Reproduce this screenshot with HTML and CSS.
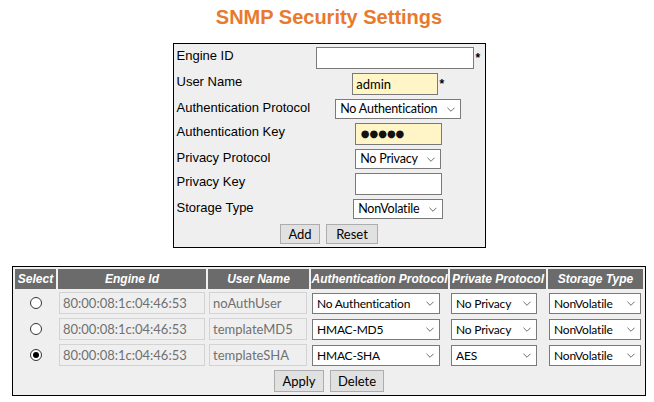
FILE: index.html
```html
<!DOCTYPE html>
<html>
<head>
<meta charset="utf-8">
<title>SNMP Security Settings</title>
<link rel="stylesheet" href="styles.css">
</head>
<body>
<div class="page">
  <h1 class="title">SNMP Security Settings</h1>

  <table class="form-box">
    <tr class="row-in">
      <td class="lbl">Engine ID</td>
      <td class="fld"><input class="txt w-engine" type="text"><span class="req">*</span></td>
    </tr>
    <tr class="row-in">
      <td class="lbl">User Name</td>
      <td class="fld"><input class="txt yellow w-user" type="text" value="admin"><span class="req">*</span></td>
    </tr>
    <tr class="row-sel">
      <td class="lbl">Authentication Protocol</td>
      <td class="fld"><span class="sel w-auth"><select><option>No Authentication</option></select><svg class="chev" viewBox="0 0 9 5"><path d="M0.5 0.5 L4.5 4.5 L8.5 0.5"/></svg></span></td>
    </tr>
    <tr class="row-in">
      <td class="lbl">Authentication Key</td>
      <td class="fld"><span class="txt yellow w-key dots">●●●●●</span></td>
    </tr>
    <tr class="row-sel">
      <td class="lbl">Privacy Protocol</td>
      <td class="fld"><span class="sel w-priv"><select><option>No Privacy</option></select><svg class="chev" viewBox="0 0 9 5"><path d="M0.5 0.5 L4.5 4.5 L8.5 0.5"/></svg></span></td>
    </tr>
    <tr class="row-in">
      <td class="lbl">Privacy Key</td>
      <td class="fld"><input class="txt w-key" type="text"></td>
    </tr>
    <tr class="row-sel">
      <td class="lbl">Storage Type</td>
      <td class="fld"><span class="sel w-store"><select><option>NonVolatile</option></select><svg class="chev" viewBox="0 0 9 5"><path d="M0.5 0.5 L4.5 4.5 L8.5 0.5"/></svg></span></td>
    </tr>
    <tr>
      <td class="btns" colspan="2"><button class="btn b-add">Add</button><button class="btn b-reset">Reset</button></td>
    </tr>
  </table>

  <table class="users">
    <colgroup>
      <col class="c-select"><col class="c-engine"><col class="c-user"><col class="c-auth"><col class="c-priv"><col class="c-store">
    </colgroup>
    <tr>
      <th>Select</th><th>Engine Id</th><th>User Name</th><th>Authentication Protocol</th><th>Private Protocol</th><th>Storage Type</th>
    </tr>
    <tr>
      <td class="rad"><span class="radio"></span></td>
      <td><span class="dis w-eid">80:00:08:1c:04:46:53</span></td>
      <td><span class="dis w-uname">noAuthUser</span></td>
      <td><span class="sel t-auth"><select><option>No Authentication</option></select><svg class="chev" viewBox="0 0 9 5"><path d="M0.5 0.5 L4.5 4.5 L8.5 0.5"/></svg></span></td>
      <td><span class="sel t-priv"><select><option>No Privacy</option></select><svg class="chev" viewBox="0 0 9 5"><path d="M0.5 0.5 L4.5 4.5 L8.5 0.5"/></svg></span></td>
      <td><span class="sel t-store"><select><option>NonVolatile</option></select><svg class="chev" viewBox="0 0 9 5"><path d="M0.5 0.5 L4.5 4.5 L8.5 0.5"/></svg></span></td>
    </tr>
    <tr>
      <td class="rad"><span class="radio"></span></td>
      <td><span class="dis w-eid">80:00:08:1c:04:46:53</span></td>
      <td><span class="dis w-uname">templateMD5</span></td>
      <td><span class="sel t-auth"><select><option>HMAC-MD5</option></select><svg class="chev" viewBox="0 0 9 5"><path d="M0.5 0.5 L4.5 4.5 L8.5 0.5"/></svg></span></td>
      <td><span class="sel t-priv"><select><option>No Privacy</option></select><svg class="chev" viewBox="0 0 9 5"><path d="M0.5 0.5 L4.5 4.5 L8.5 0.5"/></svg></span></td>
      <td><span class="sel t-store"><select><option>NonVolatile</option></select><svg class="chev" viewBox="0 0 9 5"><path d="M0.5 0.5 L4.5 4.5 L8.5 0.5"/></svg></span></td>
    </tr>
    <tr>
      <td class="rad"><span class="radio checked"></span></td>
      <td><span class="dis w-eid">80:00:08:1c:04:46:53</span></td>
      <td><span class="dis w-uname">templateSHA</span></td>
      <td><span class="sel t-auth"><select><option>HMAC-SHA</option></select><svg class="chev" viewBox="0 0 9 5"><path d="M0.5 0.5 L4.5 4.5 L8.5 0.5"/></svg></span></td>
      <td><span class="sel t-priv"><select><option>AES</option></select><svg class="chev" viewBox="0 0 9 5"><path d="M0.5 0.5 L4.5 4.5 L8.5 0.5"/></svg></span></td>
      <td><span class="sel t-store"><select><option>NonVolatile</option></select><svg class="chev" viewBox="0 0 9 5"><path d="M0.5 0.5 L4.5 4.5 L8.5 0.5"/></svg></span></td>
    </tr>
    <tr>
      <td class="btns" colspan="6"><button class="btn b-apply">Apply</button><button class="btn b-delete">Delete</button></td>
    </tr>
  </table>
</div>
</body>
</html>
```

FILE: styles.css
```css
* { box-sizing: border-box; }

body {
  margin: 0;
  background: #ffffff;
  font-family: "Liberation Sans", Arial, sans-serif;
  font-size: 13px;
  color: #000;
}

.page {
  width: 634px;
  margin-left: 12px;
}

.title {
  margin: 5px 0 14px;
  text-align: center;
  font-size: 20px;
  line-height: 24px;
  font-weight: bold;
  color: #e8792d;
}

/* ---------- top form ---------- */
.form-box {
  margin: 0 auto;
  width: 313px;
  border: 1px solid #000;
  border-spacing: 2px;
  background: #efefef;
  table-layout: fixed;
}

.form-box td { padding: 1px 0; }

.form-box .lbl {
  width: 136px;
  vertical-align: top;
  line-height: 15px;
  padding-top: 2px;
  padding-left: 1px;
  white-space: nowrap;
}

.form-box .fld {
  width: 168px;
  text-align: center;
  vertical-align: middle;
  white-space: nowrap;
  font-size: 0;
}

.row-in td { height: 24px; }
.row-sel td { height: 22px; }

.txt {
  display: inline-block;
  vertical-align: middle;
  height: 22px;
  border: 1px solid #7a7a7a;
  background: #fff;
  padding: 0 3px;
  font-family: Lato, "Open Sans", sans-serif;
  font-size: 13px;
  color: #000;
  text-align: left;
  line-height: 20px;
  outline: none;
}

.yellow { background: #fff5c6; }

.w-engine { width: 158px; }
.w-user { width: 86px; }
.w-key { width: 87px; }

.dots {
  font-family: "DejaVu Sans", sans-serif;
  font-size: 10px;
  color: #111;
  padding-left: 5px;
}

.req {
  display: inline-block;
  vertical-align: middle;
  width: 6px;
  text-align: right;
  font-family: "Liberation Sans", Arial, sans-serif;
  font-size: 12px;
  font-weight: bold;
  line-height: 12px;
}

.sel {
  position: relative;
  display: inline-block;
  vertical-align: middle;
  font-size: 0;
}

.sel select {
  -webkit-appearance: none;
  appearance: none;
  display: block;
  width: 100%;
  height: 20px;
  margin: 0;
  border: 1px solid #7a7a7a;
  border-radius: 0;
  background: #fff;
  padding: 0 14px 0 4px;
  font-family: Lato, "Open Sans", sans-serif;
  font-size: 12.5px;
  letter-spacing: -0.2px;
  line-height: 18px;
  color: #000;
  outline: none;
}

.chev {
  position: absolute;
  right: 6px;
  top: 50%;
  width: 8px;
  height: 5px;
  margin-top: -2px;
  fill: none;
  stroke: #5a5a5a;
  stroke-width: 1;
  pointer-events: none;
}

.w-auth { width: 126px; }
.w-priv { width: 86px; }
.w-store { width: 90px; }

.btns {
  text-align: center;
  font-size: 0;
}

.btn {
  display: inline-block;
  vertical-align: middle;
  margin: 0 3px;
  padding: 0;
  height: 20px;
  border: 1px solid #adadad;
  background: #e1e1e1;
  font-family: Lato, "Open Sans", sans-serif;
  font-size: 13px;
  line-height: 18px;
  color: #000;
}

.form-box .btns { padding-top: 2px; }

.b-add { width: 40px; }
.b-reset { width: 52px; }

/* ---------- users table ---------- */
.users {
  margin-top: 18px;
  width: 634px;
  table-layout: fixed;
  border: 1px solid #000;
  border-spacing: 2px;
  background: #efefef;
}

.c-select { width: 41px; }
.c-engine { width: 148px; }
.c-user { width: 101px; }
.c-auth { width: 137px; }
.c-priv { width: 96px; }
.c-store { width: 95px; }

.users th {
  height: 20px;
  padding: 0;
  background: #6b6b6b;
  color: #fff;
  font-family: "Liberation Sans", Arial, sans-serif;
  font-size: 12px;
  font-weight: bold;
  font-style: italic;
  text-align: center;
  white-space: nowrap;
  overflow: hidden;
}

.users td {
  height: 24px;
  padding: 1px 0 1px 1px;
  vertical-align: middle;
  white-space: nowrap;
  font-size: 0;
}

.users td.rad { text-align: center; padding-left: 0; }

.radio {
  display: inline-block;
  vertical-align: middle;
  width: 12px;
  height: 12px;
  border: 1px solid #333;
  border-radius: 50%;
  background: #fff;
  position: relative;
}

.radio.checked::after {
  content: "";
  position: absolute;
  left: 2px;
  top: 2px;
  width: 6px;
  height: 6px;
  border-radius: 50%;
  background: #000;
}

.dis {
  display: inline-block;
  vertical-align: middle;
  height: 22px;
  border: 1px solid #d3d3d3;
  background: #efefef;
  padding: 0 3px;
  font-family: Lato, "Open Sans", sans-serif;
  font-size: 13px;
  line-height: 20px;
  color: #707070;
}

.w-eid { width: 146px; }
.w-uname { width: 98px; }

.users .sel select { height: 21px; line-height: 19px; font-size: 12px; letter-spacing: -0.2px; }

.t-auth { width: 128px; }
.t-priv { width: 86px; }
.t-store { width: 92px; }

.users .btns {
  text-align: center;
  padding: 1px 0;
}

.users .btn { height: 22px; line-height: 20px; }
.b-apply { width: 50px; }
.b-delete { width: 54px; }
```
